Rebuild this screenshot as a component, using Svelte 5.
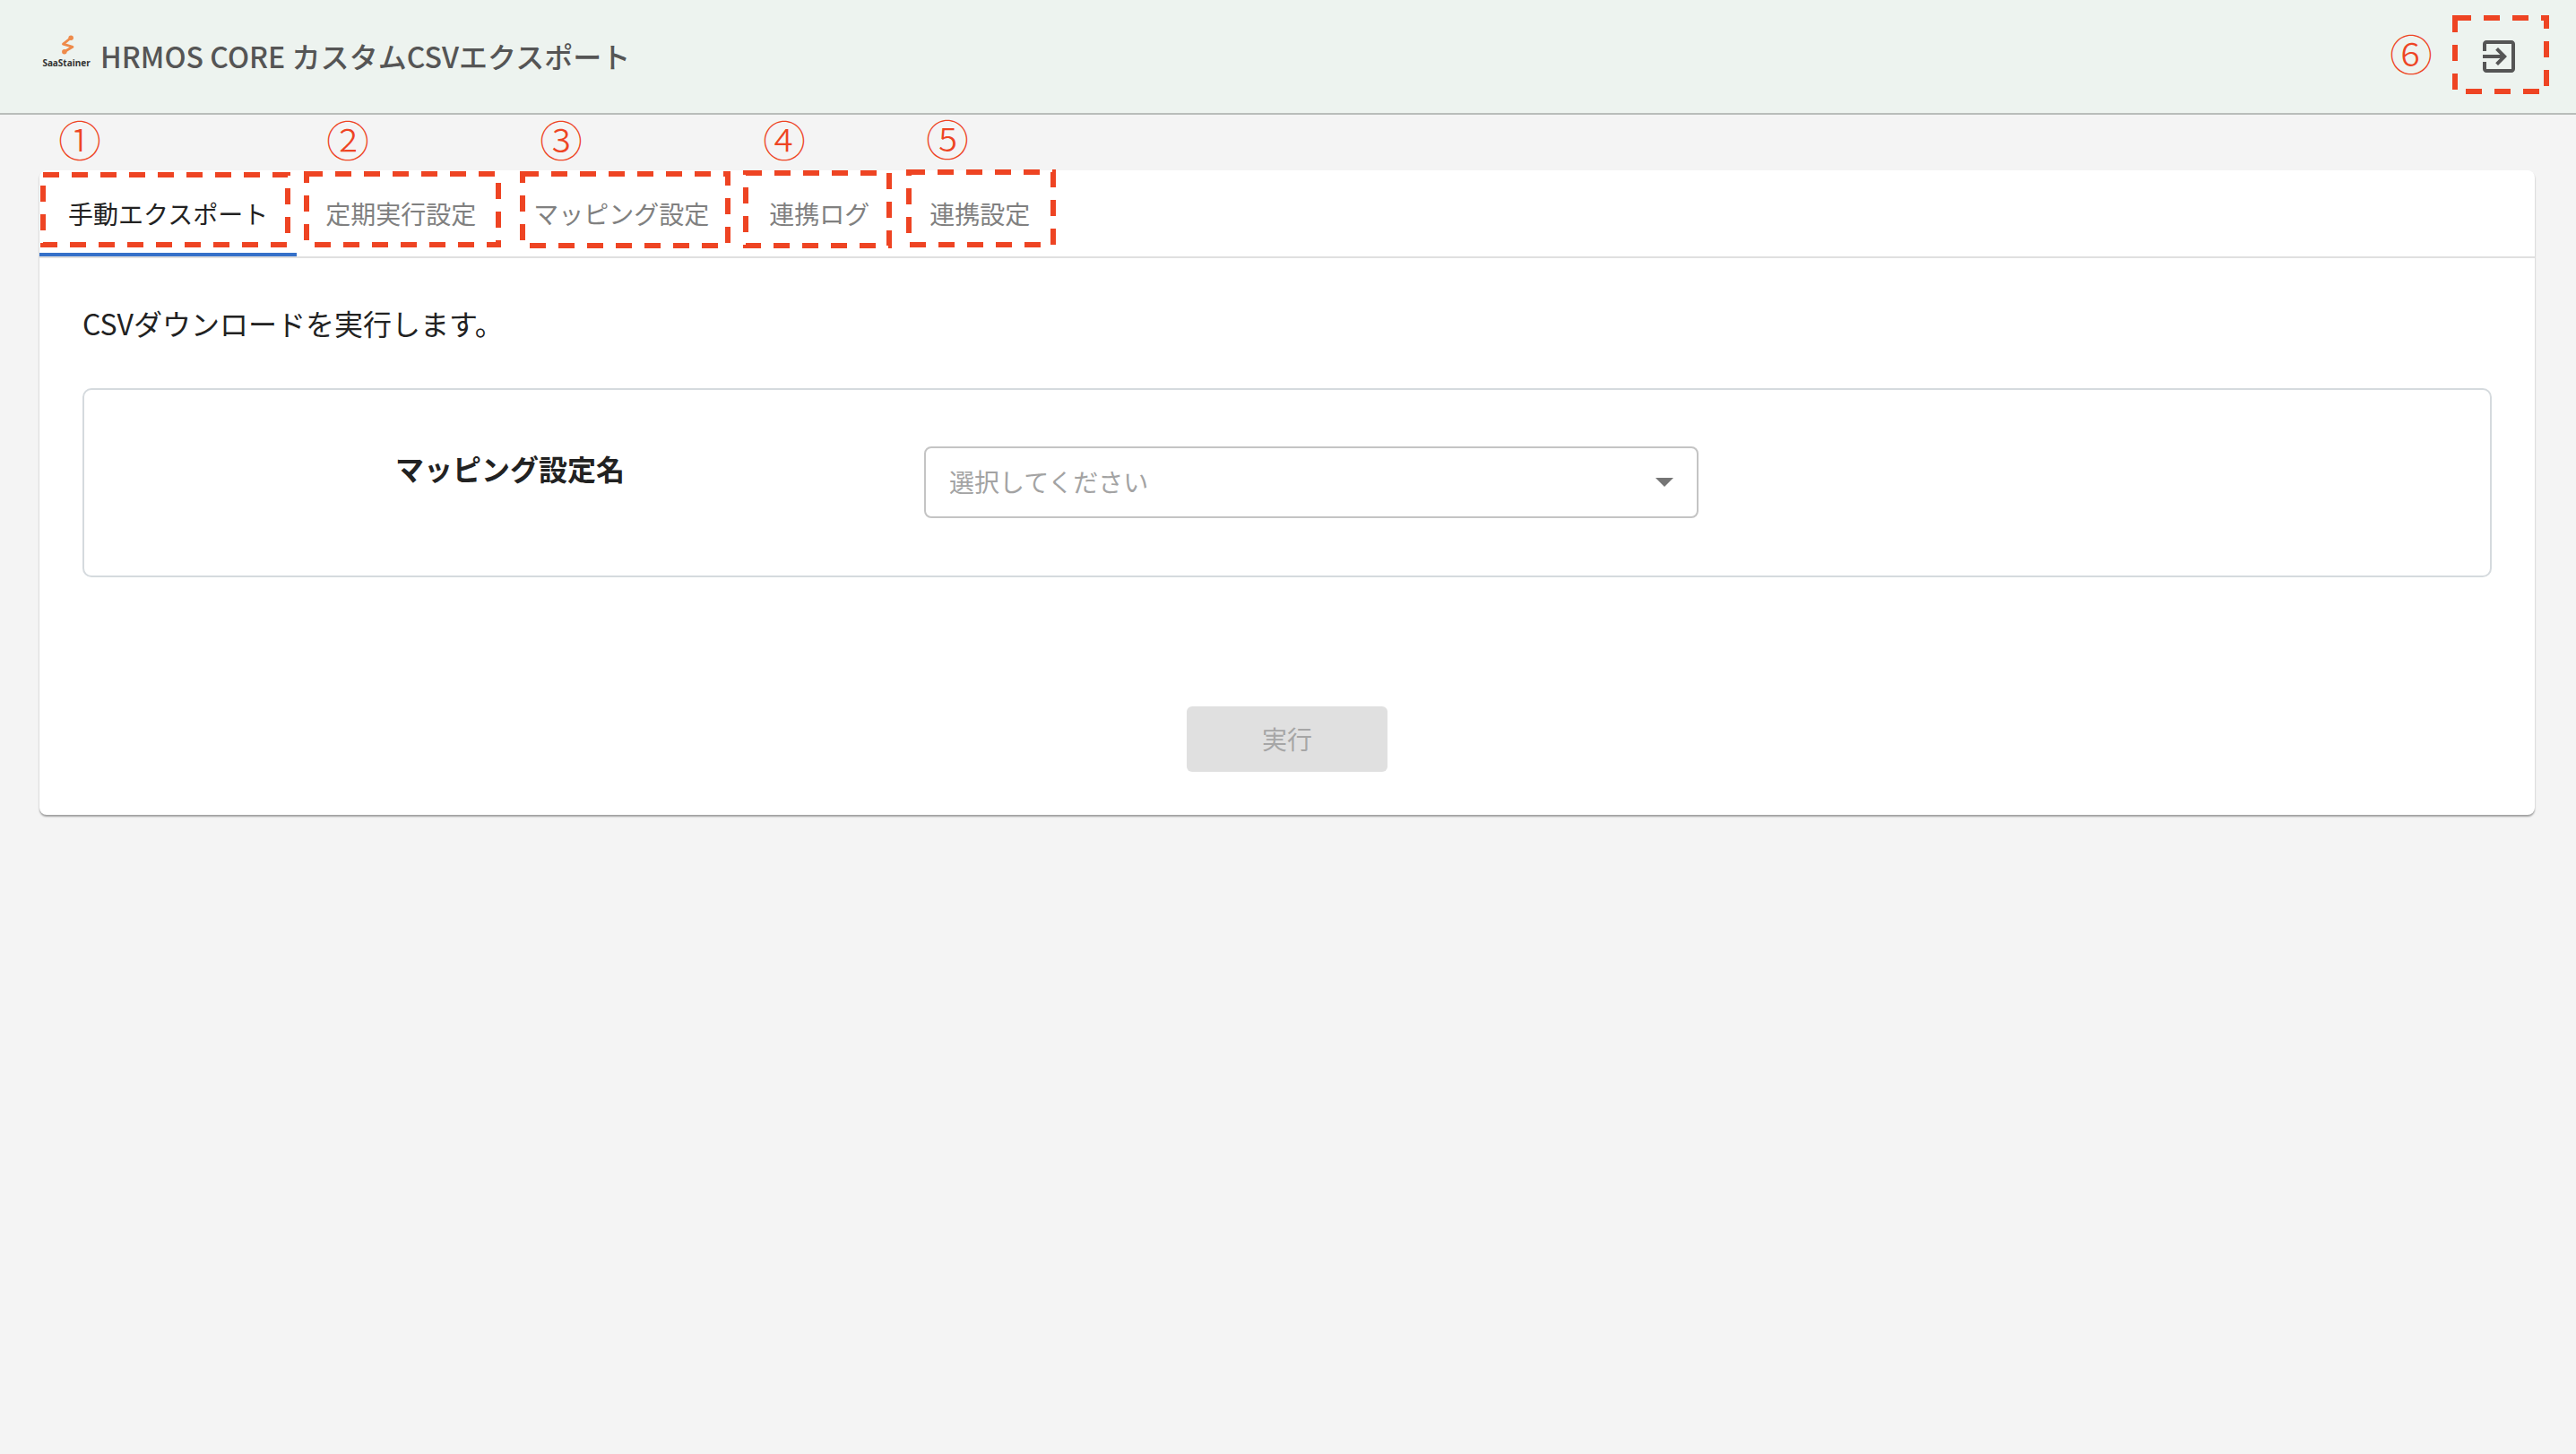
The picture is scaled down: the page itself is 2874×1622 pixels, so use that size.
<script>
  const tabs = ['手動エクスポート', '定期実行設定', 'マッピング設定', '連携ログ', '連携設定'];

  // review markers drawn on top of the screen
  const boxes = [
    { x: 48, y: 195, w: 273, h: 78 },
    { x: 342, y: 194, w: 214, h: 79 },
    { x: 583, y: 194, w: 229, h: 80 },
    { x: 832, y: 193, w: 160, h: 81 },
    { x: 1014, y: 192, w: 161, h: 81 },
    { x: 2739, y: 20, w: 102, h: 82 }
  ];
  const marks = [
    { n: '①', x: 89, y: 158 },
    { n: '②', x: 388, y: 158 },
    { n: '③', x: 626, y: 158 },
    { n: '④', x: 875, y: 158 },
    { n: '⑤', x: 1057, y: 157 },
    { n: '⑥', x: 2690, y: 62 }
  ];
</script>

<div class="page">
  <header class="topbar">
    <div class="logo">
      <svg width="17" height="22" viewBox="0 0 18 24" fill="none">
        <path d="M13 3.5 L3.5 11 L15 14.5 L5 20.5" stroke="#ee8a4a" stroke-width="3" stroke-linecap="round" stroke-linejoin="round" />
        <circle cx="13" cy="3.5" r="3" fill="#ee8a4a" />
        <circle cx="5" cy="20.5" r="3" fill="#ee8a4a" />
      </svg>
      <span>SaaStainer</span>
    </div>
    <h1>HRMOS CORE カスタムCSVエクスポート</h1>
    <button class="exit" aria-label="exit">
      <svg width="48" height="48" viewBox="0 0 24 24" fill="#555">
        <path d="M10.09 15.59L11.5 17l5-5-5-5-1.41 1.41L12.67 11H3v2h9.67l-2.58 2.59zM19 3H5c-1.11 0-2 .9-2 2v4h2V5h14v14H5v-4H3v4c0 1.1.89 2 2 2h14c1.1 0 2-.9 2-2V5c0-1.1-.9-2-2-2z" />
      </svg>
    </button>
  </header>

  <main class="content">
    <section class="card">
      <nav class="tabs">
        {#each tabs as tab, i}
          <div class="tab" class:active={i === 0}>{tab}</div>
        {/each}
      </nav>

      <div class="body">
        <p class="lead">CSVダウンロードを実行します。</p>

        <div class="form">
          <div class="label">マッピング設定名</div>
          <div class="select">
            <span>選択してください</span>
            <i class="caret"></i>
          </div>
        </div>

        <div class="actions">
          <button class="run" disabled>実行</button>
        </div>
      </div>
    </section>
  </main>

  <svg class="marks" width="2874" height="1622">
    {#each boxes as b}
      <rect x={b.x} y={b.y} width={b.w} height={b.h} fill="none" stroke="#ee4423" stroke-width="6" stroke-dasharray="18 14" />
    {/each}
    {#each marks as m}
      <text x={m.x} y={m.y} dy="0.36em" text-anchor="middle">{m.n}</text>
    {/each}
  </svg>
</div>

<style>
  :global(body) {
    margin: 0;
    background: #f4f4f4;
  }

  .page {
    position: relative;
    min-height: 1622px;
    font-family: "Noto Sans CJK JP", "Noto Sans", sans-serif;
    color: #222;
  }

  .topbar {
    display: flex;
    align-items: center;
    height: 126px;
    padding: 0 62px 0 48px;
    background: #edf3ef;
    border-bottom: 2px solid #b9bdba;
  }

  .logo {
    display: flex;
    flex-direction: column;
    align-items: center;
    width: 52px;
    margin-bottom: 12px;
    margin-right: 12px;
    font-size: 10px;
    font-weight: 700;
    line-height: 12px;
    color: #333;
    font-family: "Noto Sans", sans-serif;
  }

  .logo svg {
    margin-left: 2px;
    margin-bottom: 3px;
  }

  h1 {
    margin: 0;
    flex: 1;
    padding-bottom: 3px;
    font-size: 32px;
    font-weight: 500;
    letter-spacing: .04px;
    color: #555;
  }

  .exit {
    display: flex;
    padding: 0;
    border: 0;
    background: none;
  }

  .content {
    padding: 62px 46px 0 44px;
  }

  .card {
    height: 719px;
    background: #fff;
    border-radius: 8px;
    box-shadow: 0 2px 2px rgba(0, 0, 0, .35);
  }

  .tabs {
    display: flex;
    height: 96px;
    border-bottom: 2px solid #e0e0e0;
  }

  .tab {
    display: flex;
    align-items: center;
    padding: 0 32px;
    font-size: 28px;
    color: #808080;
    box-sizing: border-box;
  }

  .tab:nth-child(n + 4) {
    padding-left: 35px;
  }

  .tab.active {
    color: #222;
    border-bottom: 4px solid #3570c9;
    padding-top: 4px;
  }

  .body {
    padding: 0 48px;
  }

  .lead {
    margin: 0;
    padding-top: 47px;
    font-size: 32px;
    line-height: 50px;
    height: 98px;
  }

  .form {
    display: flex;
    height: 207px;
    border: 2px solid #d5dade;
    border-radius: 10px;
  }

  .label {
    width: 937px;
    padding: 63px 0 0 347px;
    box-sizing: border-box;
    font-size: 32px;
    font-weight: 700;
    line-height: 48px;
  }

  .select {
    display: flex;
    align-items: center;
    justify-content: space-between;
    box-sizing: border-box;
    width: 864px;
    height: 80px;
    margin-top: 63px;
    padding: 0 26px;
    border: 2px solid #c4c4c4;
    border-radius: 8px;
    font-size: 28px;
    color: #a3a3a3;
  }

  .select span {
    margin-bottom: 3px;
  }

  .caret {
    width: 0;
    height: 0;
    border-left: 10px solid transparent;
    border-right: 10px solid transparent;
    border-top: 10px solid #757575;
  }

  .actions {
    display: flex;
    justify-content: center;
    padding-top: 144px;
  }

  .run {
    width: 224px;
    height: 73px;
    padding: 0 0 2px;
    border: 0;
    border-radius: 6px;
    background: #e0e0e0;
    color: #a6a6a6;
    font-family: inherit;
    font-size: 28px;
  }

  .marks {
    position: absolute;
    top: 0;
    left: 0;
    pointer-events: none;
  }

  .marks text {
    font-size: 48px;
    font-weight: 300;
    fill: #ee4423;
  }
</style>
